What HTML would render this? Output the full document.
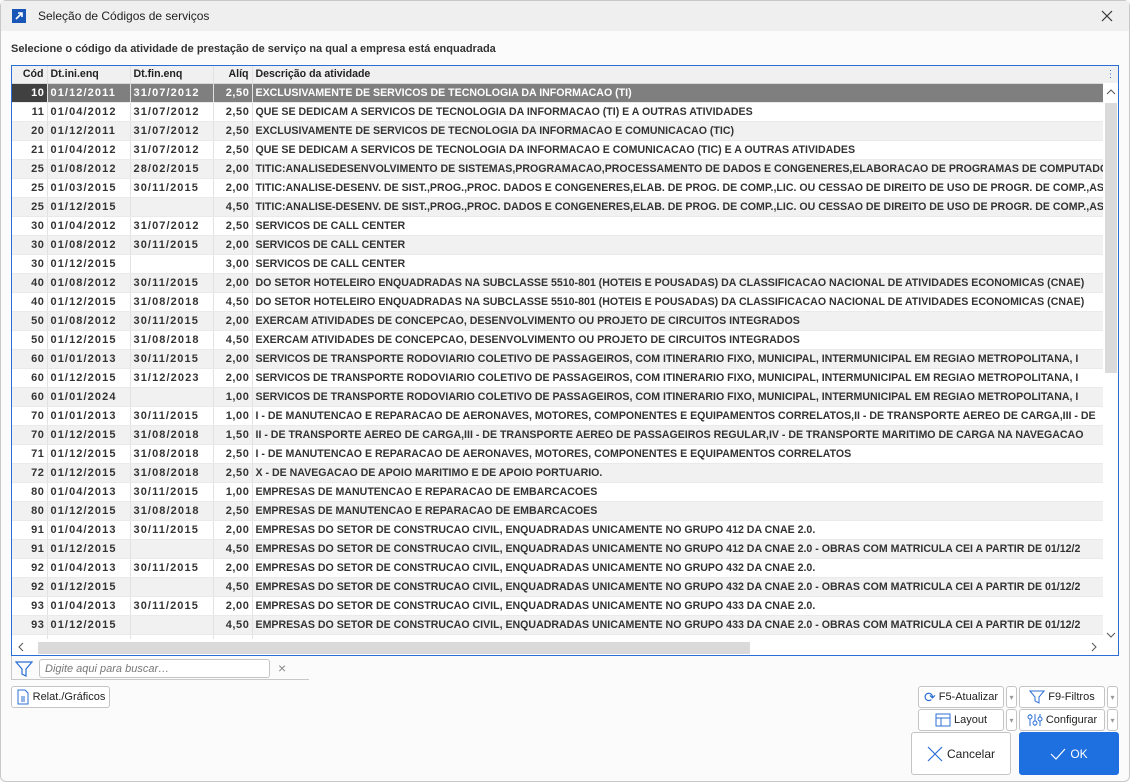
<!DOCTYPE html>
<html><head><meta charset="utf-8"><style>
*{box-sizing:border-box;margin:0;padding:0}
body{width:1130px;height:782px;background:#fbfbfb;font-family:"Liberation Sans",sans-serif;color:#222;position:relative;overflow:hidden}
.win{position:absolute;left:0;top:0;width:1130px;height:782px;border:1px solid #c8c8c8;border-radius:6px;background:#fbfbfb}
.title{height:30px;background:#efefef;display:flex;align-items:center;font-size:12px;color:#222}
.ico{width:14px;height:14px;background:#1a56b8;margin:0 12px 0 11px;position:relative}
.sub{position:absolute;left:10px;top:42px;font-size:11px;font-weight:bold;color:#333}
.grid{position:absolute;left:10px;top:64px;width:1108px;height:591px;border:1px solid #2b6fd6;background:#fff;overflow:hidden}
table{border-collapse:collapse;font-size:10.6px;font-weight:bold;color:#333;table-layout:fixed;width:1092px}
td,th{height:19px;white-space:nowrap;overflow:hidden;border-right:1px solid #e2e2e2;padding:0 3px;border-bottom:1px solid #eaeaea}
td:nth-child(-n+4){letter-spacing:1.1px;font-size:11px}
td:nth-child(4),td:first-child{letter-spacing:0.6px;padding-right:2px}
th{height:17px;background:#f0f0f0;text-align:left;color:#222;border-bottom:1px solid #d8d8d8}
.r{text-align:right}
tr:nth-child(even) td{background:#f1f1f1}
tr.sel td{background:#7f7f7f;color:#fff}
tr.sel td:first-child{background:#404040}
.vs{position:absolute;right:0;top:17px;width:15px;height:558px;background:#fff}
.vs .th{position:absolute;left:2px;top:20px;width:12px;height:270px;background:#dadada}
.hs{position:absolute;left:0;bottom:0;width:1092px;height:16px;background:#fff}
.hs .th{position:absolute;left:26px;top:3px;width:712px;height:12px;background:#dadada}
.btn{position:absolute;border:1px solid #c4c4c4;border-radius:3px;background:#fff;font-size:11px;display:flex;align-items:center;justify-content:center;color:#222}
</style></head><body><div class="win">
<div class="title"><div class="ico"><svg width="14" height="14" viewBox="0 0 14 14"><path d="M4 10L10 4M6 4h4v4" stroke="#fff" stroke-width="1.6" fill="none"/></svg></div>Seleção de Códigos de serviços
<svg style="position:absolute;right:16px;top:9px" width="12" height="12"><path d="M1 1L11 11M11 1L1 11" stroke="#333" stroke-width="1.2"/></svg></div>
<div class="sub">Selecione o código da atividade de prestação de serviço na qual a empresa está enquadrada</div>
<div class="grid">
<table>
<colgroup><col style="width:35px"><col style="width:83px"><col style="width:83px"><col style="width:39px"><col></colgroup>
<tr><th class="r">Cód</th><th>Dt.ini.enq</th><th>Dt.fin.enq</th><th class="r">Alíq</th><th>Descrição da atividade</th></tr>
<tr class="sel"><td class="r">10</td><td>01/12/2011</td><td>31/07/2012</td><td class="r">2,50</td><td>EXCLUSIVAMENTE DE SERVICOS DE TECNOLOGIA DA INFORMACAO (TI)</td></tr>
<tr><td class="r">11</td><td>01/04/2012</td><td>31/07/2012</td><td class="r">2,50</td><td>QUE SE DEDICAM A SERVICOS DE TECNOLOGIA DA INFORMACAO (TI) E A OUTRAS ATIVIDADES</td></tr>
<tr><td class="r">20</td><td>01/12/2011</td><td>31/07/2012</td><td class="r">2,50</td><td>EXCLUSIVAMENTE DE SERVICOS DE TECNOLOGIA DA INFORMACAO E COMUNICACAO (TIC)</td></tr>
<tr><td class="r">21</td><td>01/04/2012</td><td>31/07/2012</td><td class="r">2,50</td><td>QUE SE DEDICAM A SERVICOS DE TECNOLOGIA DA INFORMACAO E COMUNICACAO (TIC) E A OUTRAS ATIVIDADES</td></tr>
<tr><td class="r">25</td><td>01/08/2012</td><td>28/02/2015</td><td class="r">2,00</td><td>TITIC:ANALISEDESENVOLVIMENTO DE SISTEMAS,PROGRAMACAO,PROCESSAMENTO DE DADOS E CONGENERES,ELABORACAO DE PROGRAMAS DE COMPUTADORES</td></tr>
<tr><td class="r">25</td><td>01/03/2015</td><td>30/11/2015</td><td class="r">2,00</td><td>TITIC:ANALISE-DESENV. DE SIST.,PROG.,PROC. DADOS E CONGENERES,ELAB. DE PROG. DE COMP.,LIC. OU CESSAO DE DIREITO DE USO DE PROGR. DE COMP.,ASS</td></tr>
<tr><td class="r">25</td><td>01/12/2015</td><td></td><td class="r">4,50</td><td>TITIC:ANALISE-DESENV. DE SIST.,PROG.,PROC. DADOS E CONGENERES,ELAB. DE PROG. DE COMP.,LIC. OU CESSAO DE DIREITO DE USO DE PROGR. DE COMP.,ASS</td></tr>
<tr><td class="r">30</td><td>01/04/2012</td><td>31/07/2012</td><td class="r">2,50</td><td>SERVICOS DE CALL CENTER</td></tr>
<tr><td class="r">30</td><td>01/08/2012</td><td>30/11/2015</td><td class="r">2,00</td><td>SERVICOS DE CALL CENTER</td></tr>
<tr><td class="r">30</td><td>01/12/2015</td><td></td><td class="r">3,00</td><td>SERVICOS DE CALL CENTER</td></tr>
<tr><td class="r">40</td><td>01/08/2012</td><td>30/11/2015</td><td class="r">2,00</td><td>DO SETOR HOTELEIRO ENQUADRADAS NA SUBCLASSE 5510-801 (HOTEIS E POUSADAS) DA CLASSIFICACAO NACIONAL DE ATIVIDADES ECONOMICAS (CNAE)</td></tr>
<tr><td class="r">40</td><td>01/12/2015</td><td>31/08/2018</td><td class="r">4,50</td><td>DO SETOR HOTELEIRO ENQUADRADAS NA SUBCLASSE 5510-801 (HOTEIS E POUSADAS) DA CLASSIFICACAO NACIONAL DE ATIVIDADES ECONOMICAS (CNAE)</td></tr>
<tr><td class="r">50</td><td>01/08/2012</td><td>30/11/2015</td><td class="r">2,00</td><td>EXERCAM ATIVIDADES DE CONCEPCAO, DESENVOLVIMENTO OU PROJETO DE CIRCUITOS INTEGRADOS</td></tr>
<tr><td class="r">50</td><td>01/12/2015</td><td>31/08/2018</td><td class="r">4,50</td><td>EXERCAM ATIVIDADES DE CONCEPCAO, DESENVOLVIMENTO OU PROJETO DE CIRCUITOS INTEGRADOS</td></tr>
<tr><td class="r">60</td><td>01/01/2013</td><td>30/11/2015</td><td class="r">2,00</td><td>SERVICOS DE TRANSPORTE RODOVIARIO COLETIVO DE PASSAGEIROS, COM ITINERARIO FIXO, MUNICIPAL, INTERMUNICIPAL EM REGIAO METROPOLITANA, I</td></tr>
<tr><td class="r">60</td><td>01/12/2015</td><td>31/12/2023</td><td class="r">2,00</td><td>SERVICOS DE TRANSPORTE RODOVIARIO COLETIVO DE PASSAGEIROS, COM ITINERARIO FIXO, MUNICIPAL, INTERMUNICIPAL EM REGIAO METROPOLITANA, I</td></tr>
<tr><td class="r">60</td><td>01/01/2024</td><td></td><td class="r">1,00</td><td>SERVICOS DE TRANSPORTE RODOVIARIO COLETIVO DE PASSAGEIROS, COM ITINERARIO FIXO, MUNICIPAL, INTERMUNICIPAL EM REGIAO METROPOLITANA, I</td></tr>
<tr><td class="r">70</td><td>01/01/2013</td><td>30/11/2015</td><td class="r">1,00</td><td>I - DE MANUTENCAO E REPARACAO DE AERONAVES, MOTORES, COMPONENTES E EQUIPAMENTOS CORRELATOS,II - DE TRANSPORTE AEREO DE CARGA,III - DE</td></tr>
<tr><td class="r">70</td><td>01/12/2015</td><td>31/08/2018</td><td class="r">1,50</td><td>II - DE TRANSPORTE AEREO DE CARGA,III - DE TRANSPORTE AEREO DE PASSAGEIROS REGULAR,IV - DE TRANSPORTE MARITIMO DE CARGA NA NAVEGACAO</td></tr>
<tr><td class="r">71</td><td>01/12/2015</td><td>31/08/2018</td><td class="r">2,50</td><td>I - DE MANUTENCAO E REPARACAO DE AERONAVES, MOTORES, COMPONENTES E EQUIPAMENTOS CORRELATOS</td></tr>
<tr><td class="r">72</td><td>01/12/2015</td><td>31/08/2018</td><td class="r">2,50</td><td>X - DE NAVEGACAO DE APOIO MARITIMO E DE APOIO PORTUARIO.</td></tr>
<tr><td class="r">80</td><td>01/04/2013</td><td>30/11/2015</td><td class="r">1,00</td><td>EMPRESAS DE MANUTENCAO E REPARACAO DE EMBARCACOES</td></tr>
<tr><td class="r">80</td><td>01/12/2015</td><td>31/08/2018</td><td class="r">2,50</td><td>EMPRESAS DE MANUTENCAO E REPARACAO DE EMBARCACOES</td></tr>
<tr><td class="r">91</td><td>01/04/2013</td><td>30/11/2015</td><td class="r">2,00</td><td>EMPRESAS DO SETOR DE CONSTRUCAO CIVIL, ENQUADRADAS UNICAMENTE NO GRUPO 412 DA CNAE 2.0.</td></tr>
<tr><td class="r">91</td><td>01/12/2015</td><td></td><td class="r">4,50</td><td>EMPRESAS DO SETOR DE CONSTRUCAO CIVIL, ENQUADRADAS UNICAMENTE NO GRUPO 412 DA CNAE 2.0 - OBRAS COM MATRICULA CEI A PARTIR DE 01/12/2</td></tr>
<tr><td class="r">92</td><td>01/04/2013</td><td>30/11/2015</td><td class="r">2,00</td><td>EMPRESAS DO SETOR DE CONSTRUCAO CIVIL, ENQUADRADAS UNICAMENTE NO GRUPO 432 DA CNAE 2.0.</td></tr>
<tr><td class="r">92</td><td>01/12/2015</td><td></td><td class="r">4,50</td><td>EMPRESAS DO SETOR DE CONSTRUCAO CIVIL, ENQUADRADAS UNICAMENTE NO GRUPO 432 DA CNAE 2.0 - OBRAS COM MATRICULA CEI A PARTIR DE 01/12/2</td></tr>
<tr><td class="r">93</td><td>01/04/2013</td><td>30/11/2015</td><td class="r">2,00</td><td>EMPRESAS DO SETOR DE CONSTRUCAO CIVIL, ENQUADRADAS UNICAMENTE NO GRUPO 433 DA CNAE 2.0.</td></tr>
<tr><td class="r">93</td><td>01/12/2015</td><td></td><td class="r">4,50</td><td>EMPRESAS DO SETOR DE CONSTRUCAO CIVIL, ENQUADRADAS UNICAMENTE NO GRUPO 433 DA CNAE 2.0 - OBRAS COM MATRICULA CEI A PARTIR DE 01/12/2</td></tr>
<tr><td></td><td></td><td></td><td></td><td></td></tr>
</table>
<div style="position:absolute;right:0;top:0;width:15px;height:17px;background:#f0f0f0;color:#2b6fd6;font-size:10px;text-align:center;line-height:17px">⋮</div>
<div class="vs"><svg style="position:absolute;left:3px;top:5px" width="10" height="8"><path d="M1 6L5 2L9 6" stroke="#555" fill="none"/></svg><div class="th"></div><svg style="position:absolute;left:3px;bottom:2px" width="10" height="8"><path d="M1 2L5 6L9 2" stroke="#555" fill="none"/></svg></div>
<div class="hs"><svg style="position:absolute;left:5px;top:3px" width="8" height="10"><path d="M6 1L2 5L6 9" stroke="#555" fill="none"/></svg><div class="th"></div><svg style="position:absolute;left:1078px;top:3px" width="8" height="10"><path d="M2 1L6 5L2 9" stroke="#555" fill="none"/></svg></div>
</div>
<div style="position:absolute;left:10px;top:655px;width:298px;height:24px;border:1px solid #c8c8c8;border-top:none;border-right:none;background:#fbfbfb"></div>
<svg style="position:absolute;left:14px;top:659px" width="18" height="18"><path d="M1 2H17L11 9V16L7 14V9Z" stroke="#2b6fd6" fill="none" stroke-width="1.2"/></svg>
<div style="position:absolute;left:38px;top:658px;width:231px;height:19px;border:1px solid #c4c4c4;border-radius:3px;background:#fff;font-size:11px;font-style:italic;color:#777;padding:3px 5px">Digite aqui para buscar…</div>
<div style="position:absolute;left:277px;top:659px;font-size:14px;color:#888">×</div>
<div class="btn" style="left:10px;top:685px;width:99px;height:22px"><svg width="14" height="16" style="margin-right:3px"><path d="M2 1H9L12 4V15H2Z M5 8H9M5 10H9M5 12H9" stroke="#2b6fd6" fill="none"/></svg>Relat./Gráficos</div>
<div class="btn" style="left:917px;top:685px;width:86px;height:22px"><span style="color:#2b6fd6;margin-right:3px;font-size:14px">⟳</span>F5-Atualizar</div>
<div class="btn" style="left:1005px;top:685px;width:11px;height:22px;color:#999;font-size:8px">▾</div>
<div class="btn" style="left:1018px;top:685px;width:86px;height:22px"><svg width="16" height="14" style="margin-right:3px"><path d="M1 1H15L10 7V13L6 11V7Z" stroke="#2b6fd6" fill="none"/></svg>F9-Filtros</div>
<div class="btn" style="left:1106px;top:685px;width:11px;height:22px;color:#999;font-size:8px">▾</div>
<div class="btn" style="left:917px;top:708px;width:86px;height:22px"><svg width="16" height="14" style="margin-right:3px"><path d="M1 1H15V13H1Z M1 5H15 M6 5V13" stroke="#2b6fd6" fill="none"/></svg>Layout</div>
<div class="btn" style="left:1005px;top:708px;width:11px;height:22px;color:#999;font-size:8px">▾</div>
<div class="btn" style="left:1018px;top:708px;width:86px;height:22px"><svg width="16" height="14" style="margin-right:3px"><path d="M3 1V13M8 1V13M13 1V13" stroke="#2b6fd6"/><circle cx="3" cy="4" r="2" fill="#fff" stroke="#2b6fd6"/><circle cx="8" cy="10" r="2" fill="#fff" stroke="#2b6fd6"/><circle cx="13" cy="6" r="2" fill="#fff" stroke="#2b6fd6"/></svg>Configurar</div>
<div class="btn" style="left:1106px;top:708px;width:11px;height:22px;color:#999;font-size:8px">▾</div>
<div class="btn" style="left:910px;top:731px;width:100px;height:43px;font-size:12px"><svg width="16" height="16" style="margin-right:4px"><path d="M1 1L15 15M15 1L1 15" stroke="#2b6fd6" stroke-width="1.2"/></svg>Cancelar</div>
<div class="btn" style="left:1018px;top:731px;width:100px;height:43px;background:#1e6fe0;border-color:#1e6fe0;color:#fff;font-size:12px"><svg width="16" height="12" style="margin-right:4px"><path d="M1 6L6 11L15 1" stroke="#fff" fill="none" stroke-width="1.2"/></svg>OK</div>
</div></body></html>
